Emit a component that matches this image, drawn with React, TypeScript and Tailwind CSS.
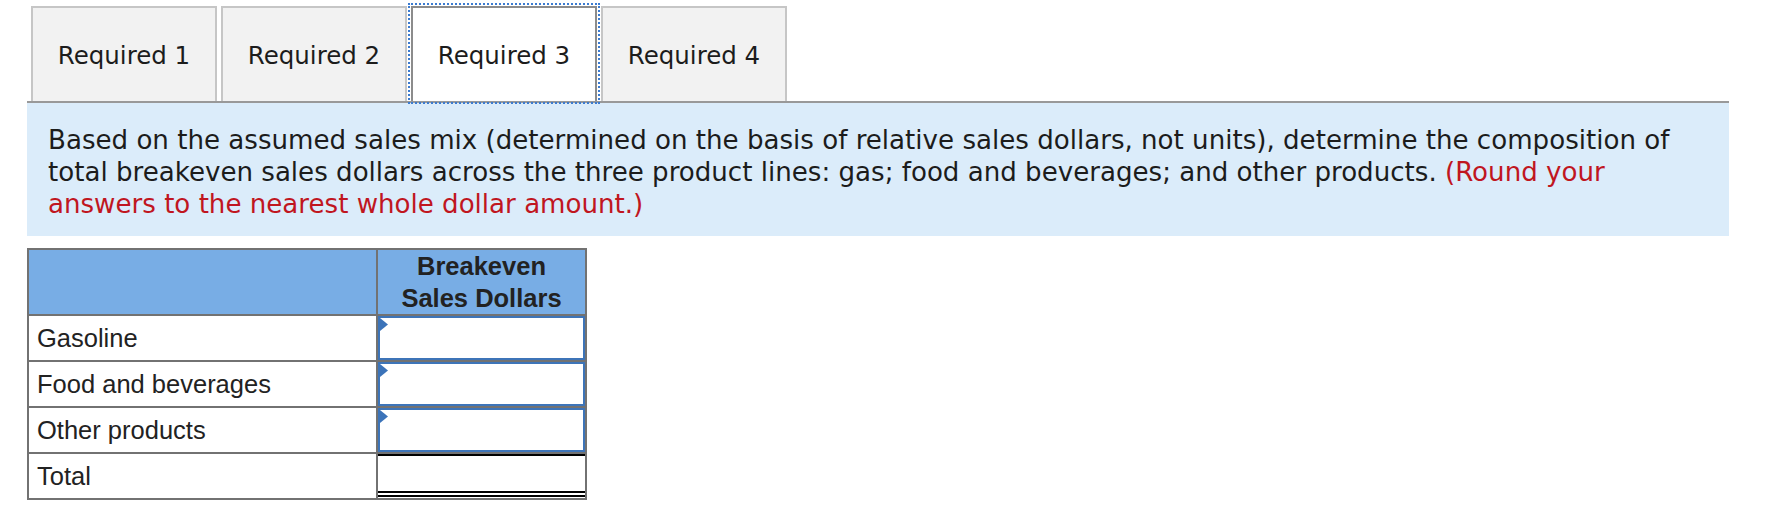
import React from "react";

const tabs = ["Required 1", "Required 2", "Required 3", "Required 4"];
const rows = ["Gasoline", "Food and beverages", "Other products"];

function Tab({ label, active }: { label: string; active: boolean }) {
  if (active) {
    return (
      <div className="outline-2 outline-dotted outline-[#3b7bd0] outline-offset-[1px] border-2 border-b-0 border-[#8c8c8c] bg-white w-[186px] h-[95px] pt-[4px] flex items-center justify-center relative z-10">
        <span>{label}</span>
      </div>
    );
  }
  return (
    <div className="border-2 border-b-0 border-[#c6c6c6] bg-[#f2f2f2] w-[186px] h-[95px] pt-[4px] flex items-center justify-center">
      <span>{label}</span>
    </div>
  );
}

function InputCell() {
  return (
    <td className="border-2 border-[#727272] p-0 h-[46px]">
      <div className="relative h-full w-full border-2 border-[#3d74b8] bg-white">
        <svg className="absolute left-0 top-0" width="8" height="14" viewBox="0 0 8 14">
          <path d="M0 0 L8 6.5 L0 13 Z" fill="#3b73b9" />
        </svg>
      </div>
    </td>
  );
}

export default function App() {
  return (
    <div className="w-[1787px] h-[508px] bg-white text-[#1c1c1c]">
      {/* tab strip */}
      <div
        className="pl-[31px] pt-[6px] flex gap-[4px] items-end text-[24.5px]"
        style={{ fontFamily: '"DejaVu Sans", sans-serif' }}
      >
        {tabs.map((t, i) => (
          <Tab key={t} label={t} active={i === 2} />
        ))}
      </div>

      <div className="ml-[27px] w-[1702px] border-t-2 border-[#999999]" />

      {/* question text */}
      <div
        className="ml-[27px] w-[1702px] bg-[#dbecfa] pl-[21px] pr-[40px] pt-[21px] pb-[16px] text-[26.1px] leading-[32px]"
        style={{ fontFamily: '"DejaVu Sans", sans-serif' }}
      >
        Based on the assumed sales mix (determined on the basis of relative sales dollars, not units), determine the
        composition of total breakeven sales dollars across the three product lines: gas; food and beverages; and other
        products. <span className="text-[#c0161f]">(Round your answers to the nearest whole dollar amount.)</span>
      </div>

      {/* answer table */}
      <table
        className="ml-[27px] mt-[12px] border-collapse text-[25.5px] text-[#222222]"
        style={{ fontFamily: '"Liberation Sans", Arial, sans-serif' }}
      >
        <thead>
          <tr className="bg-[#78ade5]">
            <th className="border-2 border-[#727272] w-[349px] h-[66px]"></th>
            <th className="border-2 border-[#727272] w-[209px] h-[66px] font-bold leading-[32px] text-center">
              Breakeven
              <br />
              Sales Dollars
            </th>
          </tr>
        </thead>
        <tbody>
          {rows.map((r) => (
            <tr key={r}>
              <td className="border-2 border-[#727272] h-[46px] pl-[8px] text-left font-normal">{r}</td>
              <InputCell />
            </tr>
          ))}
          <tr>
            <td className="border-2 border-[#727272] h-[46px] pl-[8px]">Total</td>
            <td className="border-2 border-[#727272] p-0 h-[46px]">
              <div className="h-full w-full border-t-2 border-black flex flex-col justify-end">
                <div className="border-t-2 border-b-2 border-black h-[6px] mb-[1px]" />
              </div>
            </td>
          </tr>
        </tbody>
      </table>
    </div>
  );
}
